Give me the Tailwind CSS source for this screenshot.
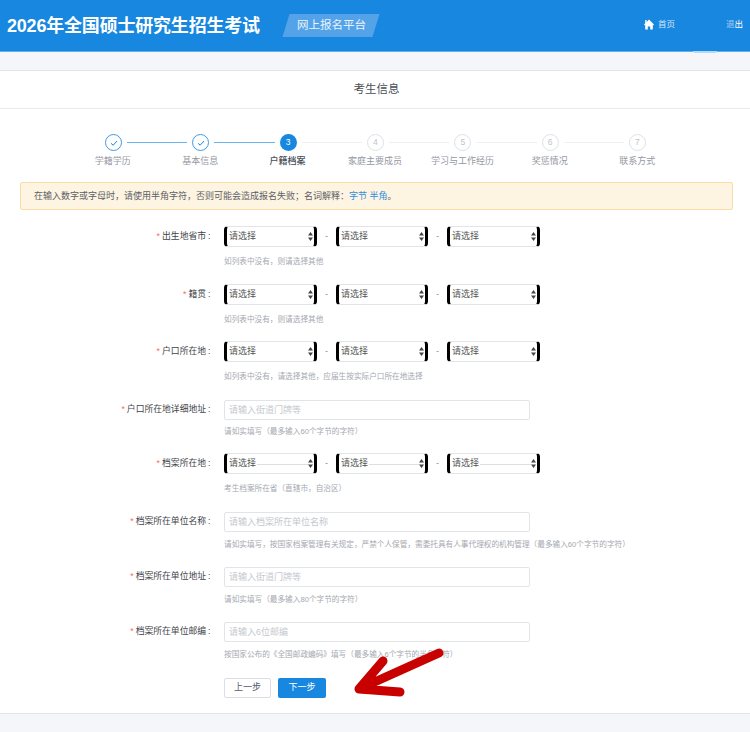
<!DOCTYPE html>
<html lang="zh-CN">
<head>
    <meta charset="UTF-8">
    <meta name="viewport" content="width=device-width, initial-scale=1.0">
    <title>网上报名平台</title>
    <script src="https://cdn.jsdelivr.net/npm/@tailwindcss/browser@4"></script>
</head>
<body class="relative w-[750px] h-[732px] overflow-hidden bg-[#f5f6f9] font-['Liberation_Sans','Noto_Sans_CJK_SC',sans-serif] text-[#515a6e]">

    <!-- Header -->
    <header class="relative h-[52px] bg-[#1787e0] border-b border-[#62aeea] flex items-center text-white">
        <h1 class="ml-[7px] text-[18px] leading-none font-semibold tracking-[-0.2px]">2026年全国硕士研究生招生考试</h1>
        <div class="ml-[26px] w-[90px] h-[23px] -skew-x-[17deg] bg-[#54a3e9] flex items-center justify-center">
            <span class="skew-x-[17deg] text-[11.5px] leading-none text-[#eaf4fd]">网上报名平台</span>
        </div>
        <div class="ml-auto mr-[51px] flex items-center -mt-[2px] text-[8.5px] text-white/80">
            <svg class="w-[10px] h-[11px] mr-[4px]" viewBox="0 0 10 11"><path fill="#fff" d="M5 .6 10 5.400 9.200 6.300 8.800 5.900V10.600H6.200V7.400H3.800V10.600H1.200V5.900L.8 6.300 0 5.400 1.200 4.200V1H2.600V2.900Z"/></svg>
            <span>首页</span>
        </div>
        <div class="mr-[7px] -mt-[2px] text-[8.5px]"><span class="text-white/60">退</span><span class="text-white">出</span></div>
        <div class="absolute left-[693px] top-[51px] w-[24px] h-[2px] rounded-b-full bg-[#b5d9f5]"></div>
    </header>

    <!-- Card -->
    <main class="mt-[18px] h-[644px] bg-white border-y border-[#e3e4ec]">
        <div class="h-[38px] pl-[3px] pt-[1px] border-b border-[#e8eaec] flex items-center justify-center text-[11.5px] text-[#4a4f58]">考生信息</div>

        <!-- Steps -->
        <div class="mt-[25px] ml-[105px] w-[541px] flex items-center">
            <div class="w-[17px] h-[17px] rounded-full border border-[#3e9ae6] flex items-center justify-center">
                <svg class="w-[8px] h-[8px]" viewBox="0 0 8 8" fill="none" stroke="#1787e0" stroke-width="1"><path d="M1 4.300 3.200 6.200 7 2"/></svg>
            </div>
            <div class="flex-1 mx-[5px] h-px bg-[#6bb3ee]"></div>
            <div class="w-[17px] h-[17px] rounded-full border border-[#3e9ae6] flex items-center justify-center">
                <svg class="w-[8px] h-[8px]" viewBox="0 0 8 8" fill="none" stroke="#1787e0" stroke-width="1"><path d="M1 4.300 3.200 6.200 7 2"/></svg>
            </div>
            <div class="flex-1 mx-[5px] h-px bg-[#6bb3ee]"></div>
            <div class="w-[17px] h-[17px] rounded-full bg-[#1787e0] text-white text-[8.5px] flex items-center justify-center">3</div>
            <div class="flex-1 mx-[5px] h-px bg-[#eff0f3]"></div>
            <div class="w-[17px] h-[17px] rounded-full border border-[#dfe1e6] text-[#c0c4cc] text-[8.5px] flex items-center justify-center">4</div>
            <div class="flex-1 mx-[5px] h-px bg-[#eff0f3]"></div>
            <div class="w-[17px] h-[17px] rounded-full border border-[#dfe1e6] text-[#c0c4cc] text-[8.5px] flex items-center justify-center">5</div>
            <div class="flex-1 mx-[5px] h-px bg-[#eff0f3]"></div>
            <div class="w-[17px] h-[17px] rounded-full border border-[#dfe1e6] text-[#c0c4cc] text-[8.5px] flex items-center justify-center">6</div>
            <div class="flex-1 mx-[5px] h-px bg-[#eff0f3]"></div>
            <div class="w-[17px] h-[17px] rounded-full border border-[#dfe1e6] text-[#c0c4cc] text-[8.5px] flex items-center justify-center">7</div>
        </div>
        <div class="mt-[4px] ml-[69px] w-[612px] grid grid-cols-7 text-center text-[9px] leading-[12px] text-[#94989f]">
            <span>学籍学历</span>
            <span>基本信息</span>
            <span class="font-medium text-[#4a4f58]">户籍档案</span>
            <span>家庭主要成员</span>
            <span>学习与工作经历</span>
            <span>奖惩情况</span>
            <span>联系方式</span>
        </div>

        <!-- Notice -->
        <div class="mt-[15px] ml-[20px] w-[713px] h-[28px] pl-[13px] pt-[1px] flex items-center rounded-[2px] border border-[#fcdca6] bg-[#fef4e2] text-[9px] text-[#5c5f66]">
            在输入数字或字母时，请使用半角字符，否则可能会造成报名失败；名词解释：<span class="text-[#2d8fe0]">字节 半角</span>。
        </div>

        <!-- 出生地省市 -->
        <div class="mt-[16px] h-[21px] flex items-center">
            <label class="w-[212px] pr-[1.5px] text-right text-[8.8px] text-[#3f4449]"><span class="text-[#f56c6c] mr-[2px]">*</span>出生地省市<span class="ml-[2px]">:</span></label>
            <div class="ml-[12px] flex items-center">
                <div class="relative w-[93px] h-[21px] pl-[2px] pt-px flex items-center rounded-[4px] border-x-[3px] border-y border-x-black border-y-[#e2e4e8] text-[9px] text-[#555]">请选择<svg class="absolute right-[1px] top-[5px] w-[5px] h-[9px]" viewBox="0 0 5 9"><path fill="#444" d="M2.500 0 5 3.500H0ZM2.500 9 0 5.500H5Z"/></svg></div>
                <span class="w-[19px] text-center text-[9px] text-[#8a8f96]">-</span>
                <div class="relative w-[92px] h-[21px] pl-[2px] pt-px flex items-center rounded-[4px] border-x-[3px] border-y border-x-black border-y-[#e2e4e8] text-[9px] text-[#555]">请选择<svg class="absolute right-[1px] top-[5px] w-[5px] h-[9px]" viewBox="0 0 5 9"><path fill="#444" d="M2.500 0 5 3.500H0ZM2.500 9 0 5.500H5Z"/></svg></div>
                <span class="w-[19px] text-center text-[9px] text-[#8a8f96]">-</span>
                <div class="relative w-[93px] h-[21px] pl-[2px] pt-px flex items-center rounded-[4px] border-x-[3px] border-y border-x-black border-y-[#e2e4e8] text-[9px] text-[#555]">请选择<svg class="absolute right-[1px] top-[5px] w-[5px] h-[9px]" viewBox="0 0 5 9"><path fill="#444" d="M2.500 0 5 3.500H0ZM2.500 9 0 5.500H5Z"/></svg></div>
            </div>
        </div>
        <p class="mt-[9px] ml-[224px] h-[12px] text-[7.65px] leading-[12px] text-[#a5a9b0]">如列表中没有，则请选择其他</p>

        <!-- 籍贯 -->
        <div class="mt-[16px] h-[21px] flex items-center">
            <label class="w-[212px] pr-[1.5px] text-right text-[8.8px] text-[#3f4449]"><span class="text-[#f56c6c] mr-[2px]">*</span>籍贯<span class="ml-[2px]">:</span></label>
            <div class="ml-[12px] flex items-center">
                <div class="relative w-[93px] h-[21px] pl-[2px] pt-px flex items-center rounded-[4px] border-x-[3px] border-y border-x-black border-y-[#e2e4e8] text-[9px] text-[#555]">请选择<svg class="absolute right-[1px] top-[5px] w-[5px] h-[9px]" viewBox="0 0 5 9"><path fill="#444" d="M2.500 0 5 3.500H0ZM2.500 9 0 5.500H5Z"/></svg></div>
                <span class="w-[19px] text-center text-[9px] text-[#8a8f96]">-</span>
                <div class="relative w-[92px] h-[21px] pl-[2px] pt-px flex items-center rounded-[4px] border-x-[3px] border-y border-x-black border-y-[#e2e4e8] text-[9px] text-[#555]">请选择<svg class="absolute right-[1px] top-[5px] w-[5px] h-[9px]" viewBox="0 0 5 9"><path fill="#444" d="M2.500 0 5 3.500H0ZM2.500 9 0 5.500H5Z"/></svg></div>
                <span class="w-[19px] text-center text-[9px] text-[#8a8f96]">-</span>
                <div class="relative w-[93px] h-[21px] pl-[2px] pt-px flex items-center rounded-[4px] border-x-[3px] border-y border-x-black border-y-[#e2e4e8] text-[9px] text-[#555]">请选择<svg class="absolute right-[1px] top-[5px] w-[5px] h-[9px]" viewBox="0 0 5 9"><path fill="#444" d="M2.500 0 5 3.500H0ZM2.500 9 0 5.500H5Z"/></svg></div>
            </div>
        </div>
        <p class="mt-[9px] ml-[224px] h-[12px] text-[7.65px] leading-[12px] text-[#a5a9b0]">如列表中没有，则请选择其他</p>

        <!-- 户口所在地 -->
        <div class="mt-[15px] h-[21px] flex items-center">
            <label class="w-[212px] pr-[1.5px] text-right text-[8.8px] text-[#3f4449]"><span class="text-[#f56c6c] mr-[2px]">*</span>户口所在地<span class="ml-[2px]">:</span></label>
            <div class="ml-[12px] flex items-center">
                <div class="relative w-[93px] h-[21px] pl-[2px] pt-px flex items-center rounded-[4px] border-x-[3px] border-y border-x-black border-y-[#e2e4e8] text-[9px] text-[#555]">请选择<svg class="absolute right-[1px] top-[5px] w-[5px] h-[9px]" viewBox="0 0 5 9"><path fill="#444" d="M2.500 0 5 3.500H0ZM2.500 9 0 5.500H5Z"/></svg></div>
                <span class="w-[19px] text-center text-[9px] text-[#8a8f96]">-</span>
                <div class="relative w-[92px] h-[21px] pl-[2px] pt-px flex items-center rounded-[4px] border-x-[3px] border-y border-x-black border-y-[#e2e4e8] text-[9px] text-[#555]">请选择<svg class="absolute right-[1px] top-[5px] w-[5px] h-[9px]" viewBox="0 0 5 9"><path fill="#444" d="M2.500 0 5 3.500H0ZM2.500 9 0 5.500H5Z"/></svg></div>
                <span class="w-[19px] text-center text-[9px] text-[#8a8f96]">-</span>
                <div class="relative w-[93px] h-[21px] pl-[2px] pt-px flex items-center rounded-[4px] border-x-[3px] border-y border-x-black border-y-[#e2e4e8] text-[9px] text-[#555]">请选择<svg class="absolute right-[1px] top-[5px] w-[5px] h-[9px]" viewBox="0 0 5 9"><path fill="#444" d="M2.500 0 5 3.500H0ZM2.500 9 0 5.500H5Z"/></svg></div>
            </div>
        </div>
        <p class="mt-[9px] ml-[224px] h-[12px] text-[7.65px] leading-[12px] text-[#a5a9b0]">如列表中没有，请选择其他，应届生按实际户口所在地选择</p>

        <!-- 户口所在地详细地址 -->
        <div class="mt-[17px] h-[20px] flex items-center">
            <label class="w-[212px] pr-[1.5px] text-right text-[8.8px] text-[#3f4449]"><span class="text-[#f56c6c] mr-[2px]">*</span>户口所在地详细地址<span class="ml-[2px]">:</span></label>
            <div class="ml-[12px] w-[306px] h-[20px] pl-[4px] pt-px flex items-center rounded-[2px] border border-[#e2e4e8] text-[9px] text-[#c5c8ce]">请输入街道门牌等</div>
        </div>
        <p class="mt-[6px] ml-[224px] h-[12px] text-[7.65px] leading-[12px] text-[#a5a9b0]">请如实填写（最多输入60个字节的字符）</p>

        <!-- 档案所在地 -->
        <div class="mt-[15px] h-[21px] flex items-center">
            <label class="w-[212px] pr-[1.5px] text-right text-[8.8px] text-[#3f4449]"><span class="text-[#f56c6c] mr-[2px]">*</span>档案所在地<span class="ml-[2px]">:</span></label>
            <div class="ml-[12px] flex items-center">
                <div class="relative w-[93px] h-[21px] pl-[2px] pt-px flex items-center rounded-[4px] border-x-[3px] border-y border-x-black border-y-[#e2e4e8] text-[9px] text-[#555]">请选择<span class="ml-[1px] mr-[6px] flex-1 h-px bg-[#dcdee2]"></span><svg class="absolute right-[1px] top-[5px] w-[5px] h-[9px]" viewBox="0 0 5 9"><path fill="#444" d="M2.500 0 5 3.500H0ZM2.500 9 0 5.500H5Z"/></svg></div>
                <span class="w-[19px] text-center text-[9px] text-[#8a8f96]">-</span>
                <div class="relative w-[92px] h-[21px] pl-[2px] pt-px flex items-center rounded-[4px] border-x-[3px] border-y border-x-black border-y-[#e2e4e8] text-[9px] text-[#555]">请选择<span class="ml-[1px] mr-[6px] flex-1 h-px bg-[#dcdee2]"></span><svg class="absolute right-[1px] top-[5px] w-[5px] h-[9px]" viewBox="0 0 5 9"><path fill="#444" d="M2.500 0 5 3.500H0ZM2.500 9 0 5.500H5Z"/></svg></div>
                <span class="w-[19px] text-center text-[9px] text-[#8a8f96]">-</span>
                <div class="relative w-[93px] h-[21px] pl-[2px] pt-px flex items-center rounded-[4px] border-x-[3px] border-y border-x-black border-y-[#e2e4e8] text-[9px] text-[#555]">请选择<span class="ml-[1px] mr-[6px] flex-1 h-px bg-[#dcdee2]"></span><svg class="absolute right-[1px] top-[5px] w-[5px] h-[9px]" viewBox="0 0 5 9"><path fill="#444" d="M2.500 0 5 3.500H0ZM2.500 9 0 5.500H5Z"/></svg></div>
            </div>
        </div>
        <p class="mt-[9px] ml-[224px] h-[12px] text-[7.65px] leading-[12px] text-[#a5a9b0]">考生档案所在省（直辖市，自治区）</p>

        <!-- 档案所在单位名称 -->
        <div class="mt-[17px] h-[20px] flex items-center">
            <label class="w-[212px] pr-[1.5px] text-right text-[8.8px] text-[#3f4449]"><span class="text-[#f56c6c] mr-[2px]">*</span>档案所在单位名称<span class="ml-[2px]">:</span></label>
            <div class="ml-[12px] w-[306px] h-[20px] pl-[4px] pt-px flex items-center rounded-[2px] border border-[#e2e4e8] text-[9px] text-[#c5c8ce]">请输入档案所在单位名称</div>
        </div>
        <p class="mt-[7px] ml-[224px] h-[12px] text-[7.65px] leading-[12px] text-[#a5a9b0]">请如实填写，按国家档案管理有关规定，严禁个人保管，需委托具有人事代理权的机构管理（最多输入60个字节的字符）</p>

        <!-- 档案所在单位地址 -->
        <div class="mt-[16px] h-[20px] flex items-center">
            <label class="w-[212px] pr-[1.5px] text-right text-[8.8px] text-[#3f4449]"><span class="text-[#f56c6c] mr-[2px]">*</span>档案所在单位地址<span class="ml-[2px]">:</span></label>
            <div class="ml-[12px] w-[306px] h-[20px] pl-[4px] pt-px flex items-center rounded-[2px] border border-[#e2e4e8] text-[9px] text-[#c5c8ce]">请输入街道门牌等</div>
        </div>
        <p class="mt-[7px] ml-[224px] h-[12px] text-[7.65px] leading-[12px] text-[#a5a9b0]">请如实填写（最多输入80个字节的字符）</p>

        <!-- 档案所在单位邮编 -->
        <div class="mt-[16px] h-[20px] flex items-center">
            <label class="w-[212px] pr-[1.5px] text-right text-[8.8px] text-[#3f4449]"><span class="text-[#f56c6c] mr-[2px]">*</span>档案所在单位邮编<span class="ml-[2px]">:</span></label>
            <div class="ml-[12px] w-[306px] h-[20px] pl-[4px] pt-px flex items-center rounded-[2px] border border-[#e2e4e8] text-[9px] text-[#c5c8ce]">请输入6位邮编</div>
        </div>
        <p class="mt-[7px] ml-[224px] h-[12px] text-[7.65px] leading-[12px] text-[#a5a9b0]">按国家公布的《全国邮政编码》填写（最多输入6个字节的半角字符）</p>

        <!-- Buttons -->
        <div class="mt-[17px] ml-[224px] flex gap-[7px]">
            <button class="w-[47px] h-[20px] rounded-[2px] border border-[#dcdee2] bg-white text-[9px] text-[#515a6e]">上一步</button>
            <button class="w-[48px] h-[20px] rounded-[2px] bg-[#1787e0] text-[9px] text-white">下一步</button>
        </div>
    </main>

    <!-- Red arrow drawn over the page -->
    <svg class="absolute left-0 top-0 w-[750px] h-[732px] pointer-events-none" viewBox="0 0 750 732" fill="none" stroke="#c80000" stroke-width="9" stroke-linecap="round" stroke-linejoin="round">
        <path d="M439 653 359 689M383 661 359 689 400 692"/>
    </svg>
</body>
</html>
